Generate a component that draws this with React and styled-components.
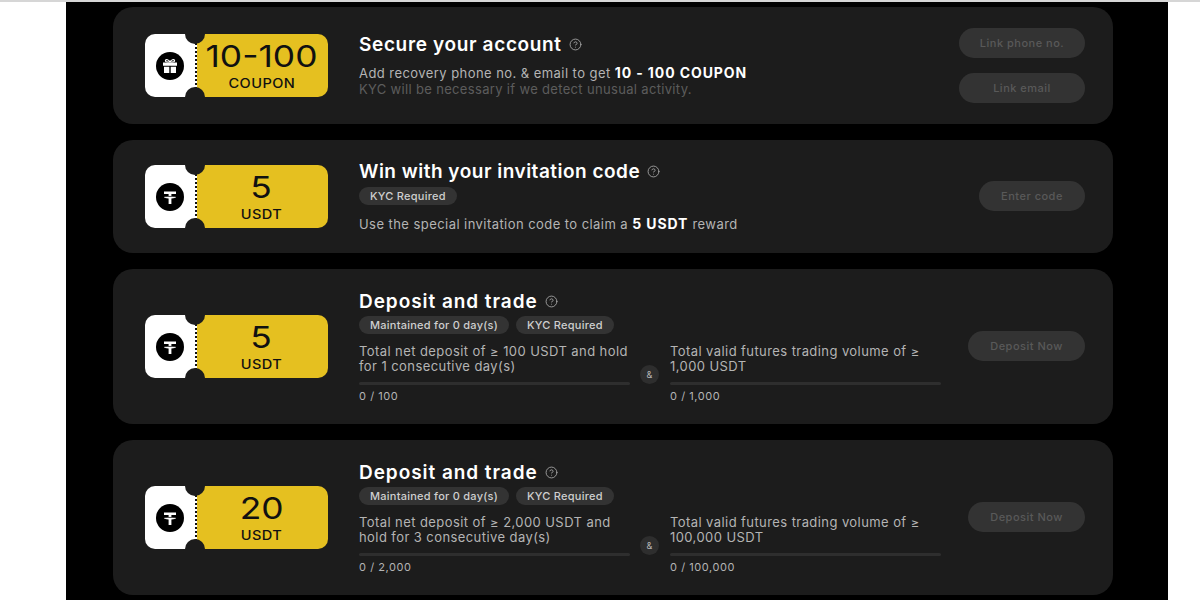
import React from "react";
import styled, { createGlobalStyle } from "styled-components";
import { CircleHelp } from "lucide-react";

const Global = createGlobalStyle`
  html, body { margin: 0; padding: 0; background: #fff; }
  body { font-family: Inter, "Liberation Sans", sans-serif; overflow: hidden; }
`;

const TopLine = styled.div`
  height: 2px;
  background: #d6d6d6;
`;

const Panel = styled.div`
  width: 1102px;
  height: 598px;
  margin-left: 66px;
  background: #000;
  overflow: hidden;
  padding: 5px 0 0 47px;
  box-sizing: border-box;
  display: flex;
  flex-direction: column;
  gap: 16px;
`;

const Card = styled.div`
  width: 1000px;
  height: ${({ $h }) => $h}px;
  flex-shrink: 0;
  box-sizing: border-box;
  background: #1c1c1c;
  border-radius: 20px;
  padding: 0 28px 0 32px;
  display: flex;
  align-items: center;
`;

const Ticket = styled.div`
  position: relative;
  width: 183px;
  height: 63px;
  flex-shrink: 0;
  display: flex;
  border-radius: 10px;
  overflow: hidden;
  margin-right: 31px;
`;

const Stub = styled.div`
  width: 50px;
  background: #fff;
  display: flex;
  align-items: center;
  justify-content: center;
  border-right: 2px dotted #111;
`;

const Amount = styled.div`
  flex: 1;
  background: #e5c020;
  color: #111;
  padding-right: 2px;
  display: flex;
  flex-direction: column;
  align-items: center;
  justify-content: center;
`;

const Value = styled.div`
  font-size: 30px;
  line-height: 32px;
  font-weight: 400;
  transform: scaleX(1.18);
`;

const Unit = styled.div`
  font-size: 13px;
  line-height: 16px;
  font-weight: 500;
  letter-spacing: 0.4px;
  margin-top: 3px;
  transform: scaleX(1.12);
`;

const Notch = styled.div`
  position: absolute;
  left: 40px;
  ${({ $bottom }) => ($bottom ? "bottom: -10px;" : "top: -10px;")}
  width: 20px;
  height: 20px;
  border-radius: 50%;
  background: #1c1c1c;
`;

const Body = styled.div`
  flex: 1;
  min-width: 0;
  display: flex;
  flex-direction: column;
  padding-bottom: ${({ $pb }) => $pb || 0}px;
`;

const TitleRow = styled.div`
  display: flex;
  align-items: center;
  gap: 7px;
  height: 24px;
  color: #fff;
`;

const Title = styled.div`
  font-size: 19px;
  font-weight: 600;
  letter-spacing: ${({ $ls }) => $ls}px;
  white-space: nowrap;
`;

const Help = styled(CircleHelp)`
  color: #a8a8a8;
  flex-shrink: 0;
`;

const Tags = styled.div`
  display: flex;
  gap: 7px;
  margin-top: ${({ $top }) => $top}px;
`;

const Tag = styled.div`
  height: 18px;
  line-height: 18px;
  padding: 0 11px;
  border-radius: 9px;
  background: #333;
  color: #cfcfcf;
  font-size: 11px;
  font-weight: 500;
  letter-spacing: 0.25px;
  white-space: nowrap;
`;

const Desc = styled.div`
  font-size: 13px;
  line-height: 16px;
  letter-spacing: ${({ $dim }) => ($dim ? "0.33px" : "0.44px")};
  color: ${({ $dim }) => ($dim ? "#5c5c5c" : "#b4b4b4")};
  margin-top: ${({ $top }) => $top || 0}px;
  white-space: nowrap;
  b {
    color: #fff;
    font-size: 14px;
    font-weight: 700;
    letter-spacing: 0.9px;
  }
`;

const Conditions = styled.div`
  display: flex;
  align-items: center;
  margin-top: 10px;
`;

const Condition = styled.div`
  width: 271px;
  flex-shrink: 0;
`;

const CondText = styled.div`
  height: 32px;
  font-size: 13px;
  line-height: 15px;
  letter-spacing: 0.42px;
  color: #b4b4b4;
  white-space: pre-line;
`;

const Track = styled.div`
  height: 3px;
  margin-top: 6px;
  border-radius: 2px;
  background: #2e2e2e;
`;

const Progress = styled.div`
  margin-top: 3px;
  font-size: 11px;
  line-height: 16px;
  letter-spacing: 0.55px;
  color: #b4b4b4;
`;

const And = styled.div`
  width: 19px;
  height: 19px;
  margin: 2px 11px 0 10px;
  flex-shrink: 0;
  border-radius: 50%;
  background: #2e2e2e;
  color: #b4b4b4;
  font-size: 9px;
  line-height: 19px;
  text-align: center;
`;

const Actions = styled.div`
  display: flex;
  flex-direction: column;
  align-items: flex-end;
  gap: 15px;
  flex-shrink: 0;
  padding-bottom: ${({ $pb }) => $pb || 0}px;
`;

const Action = styled.div`
  width: ${({ $w }) => $w}px;
  height: 30px;
  line-height: 30px;
  text-align: center;
  border-radius: 15px;
  background: #333;
  color: #595959;
  font-size: 11px;
  font-weight: 500;
  letter-spacing: 0.5px;
`;

const GiftIcon = () => (
  <svg width="28" height="28" viewBox="0 0 28 28">
    <circle cx="14" cy="14" r="14" fill="#000" />
    <path d="M7 10.5h14v3.2H7zM8 14.8h5.3V21H8zM14.7 14.8H20V21h-5.3z" fill="#fff" />
    <path d="M14 10c-1-2.600-4.200-3-4.600-1.400-.3 1.200 2 1.400 4.600 1.400zM14 10c1-2.600 4.200-3 4.600-1.400.3 1.200-2 1.400-4.600 1.400z" fill="none" stroke="#fff" strokeWidth="1.100" />
  </svg>
);

const TetherIcon = () => (
  <svg width="28" height="28" viewBox="0 0 28 28">
    <circle cx="14" cy="14" r="14" fill="#000" />
    <path d="M8 8.500h12v2.400h-4.600v2.100c2.600.150 4.600.600 4.600 1.200s-2 1.050-4.600 1.200V21h-2.800v-5.600c-2.600-.150-4.600-.600-4.600-1.200s2-1.050 4.600-1.200v-2.100H8z" fill="#fff" />
    <path d="M7.500 14.100c1.500-.900 11.500-.900 13 0" fill="none" stroke="#000" strokeWidth=".7" />
  </svg>
);

const Coupon = ({ value, unit, icon }) => (
  <Ticket>
    <Stub>{icon}</Stub>
    <Amount>
      <Value>{value}</Value>
      <Unit>{unit}</Unit>
    </Amount>
    <Notch />
    <Notch $bottom />
  </Ticket>
);

const Heading = ({ children, spacing = 0.65 }) => (
  <TitleRow>
    <Title $ls={spacing}>{children}</Title>
    <Help size={13} strokeWidth={1.6} />
  </TitleRow>
);

const trades = [
  { value: "5", deposit: "Total net deposit of ≥ 100 USDT and hold\nfor 1 consecutive day(s)", depositGoal: "0 / 100", volume: "Total valid futures trading volume of ≥\n1,000 USDT", volumeGoal: "0 / 1,000" },
  { value: "20", deposit: "Total net deposit of ≥ 2,000 USDT and\nhold for 3 consecutive day(s)", depositGoal: "0 / 2,000", volume: "Total valid futures trading volume of ≥\n100,000 USDT", volumeGoal: "0 / 100,000" },
];

const App = () => {
  return (
    <>
      <Global />
      <TopLine />
      <Panel>
        <Card $h={117}>
          <Coupon value="10-100" unit="COUPON" icon={<GiftIcon />} />
          <Body $pb={2}>
            <Heading>Secure your account</Heading>
            <Desc $top={9}>
              Add recovery phone no. &amp; email to get <b>10 - 100 COUPON</b>
            </Desc>
            <Desc $dim>KYC will be necessary if we detect unusual activity.</Desc>
          </Body>
          <Actions>
            <Action $w={126}>Link phone no.</Action>
            <Action $w={126}>Link email</Action>
          </Actions>
        </Card>

        <Card $h={113}>
          <Coupon value="5" unit="USDT" icon={<TetherIcon />} />
          <Body $pb={2}>
            <Heading spacing={0.5}>Win with your invitation code</Heading>
            <Tags $top={3}>
              <Tag>KYC Required</Tag>
            </Tags>
            <Desc $top={11}>
              Use the special invitation code to claim a <b>5 USDT</b> reward
            </Desc>
          </Body>
          <Actions $pb={2}>
            <Action $w={106}>Enter code</Action>
          </Actions>
        </Card>

        {trades.map((t) => (
          <Card $h={155} key={t.value}>
            <Coupon value={t.value} unit="USDT" icon={<TetherIcon />} />
            <Body>
              <Heading spacing={0.95}>Deposit and trade</Heading>
              <Tags $top={2}>
                <Tag>Maintained for 0 day(s)</Tag>
                <Tag>KYC Required</Tag>
              </Tags>
              <Conditions>
                <Condition>
                  <CondText>{t.deposit}</CondText>
                  <Track />
                  <Progress>{t.depositGoal}</Progress>
                </Condition>
                <And>&amp;</And>
                <Condition>
                  <CondText>{t.volume}</CondText>
                  <Track />
                  <Progress>{t.volumeGoal}</Progress>
                </Condition>
              </Conditions>
            </Body>
            <Actions $pb={2}>
              <Action $w={117}>Deposit Now</Action>
            </Actions>
          </Card>
        ))}
      </Panel>
    </>
  );
};

export default App;
